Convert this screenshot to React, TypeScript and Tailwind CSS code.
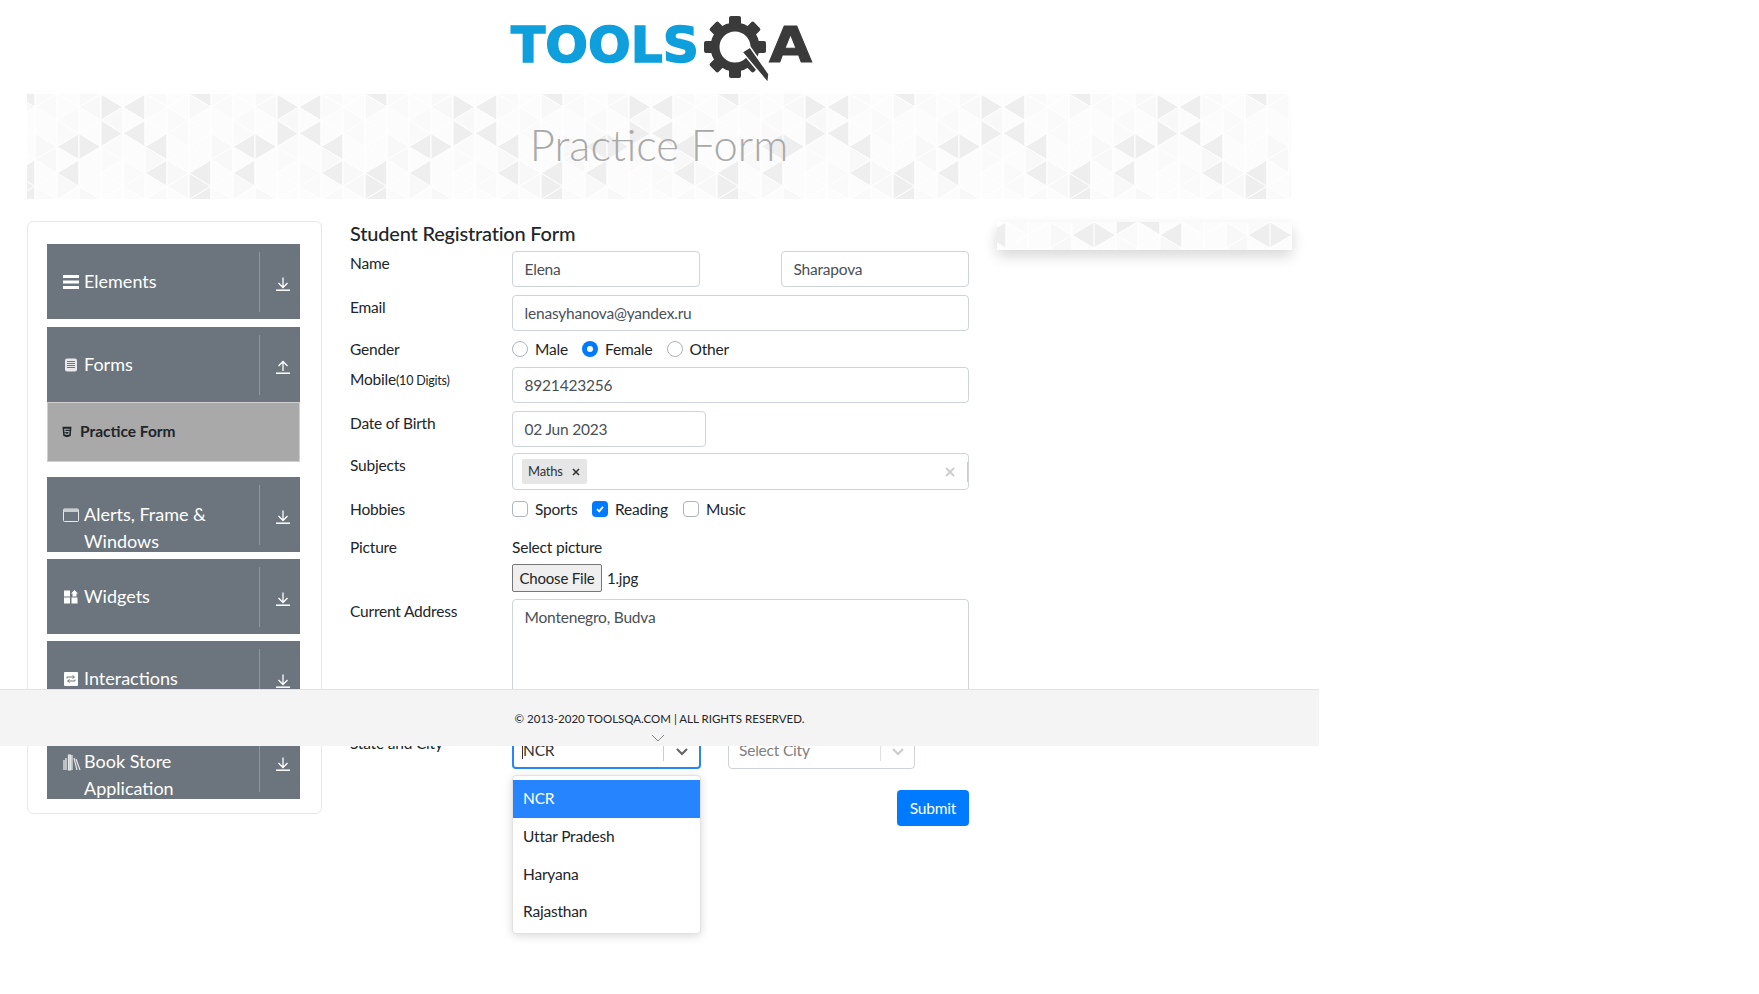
import type { ReactNode } from 'react'
import { FaHtml5 } from 'react-icons/fa'

const darkCells = new Set(['L2,0', 'R2,0', 'L6,0', 'R3,3', 'L5,3', 'L2,1', 'L6,1', 'L0,1', 'R7,1', 'R3,2', 'L5,2', 'L0,2'])

function Triangles({ x0, y0, width, height }: { x0: number; y0: number; width: number; height: number }) {
  const a = 26.4
  const polys: { points: string; fill: string; key: string }[] = []
  for (let k = -2; k * 22 + x0 < width + 22; k++) {
    const x = x0 + k * 22
    for (let n = -6; n < 8; n++) {
      const yc = y0 + a * n + (((k % 2) + 2) % 2 === 1 ? a / 2 : 0)
      if (yc < -a || yc > height + a) continue
      for (const dir of ['L', 'R']) {
        const kk = ((k % 8) + 8) % 8
        const nn = ((n % 4) + 4) % 4
        const h = (kk * 7 + nn * 13 + (dir === 'L' ? 3 : 0)) % 5
        const fill = darkCells.has(`${dir}${kk},${nn}`) ? '#eeeeee' : h === 0 ? '#f8f8f8' : h === 1 ? '#fafafa' : '#fcfcfc'
        const apex = dir === 'L' ? x - 22 : x + 22
        polys.push({
          key: `${dir}${k},${n}`,
          fill,
          points: `${x},${yc - a / 2} ${x},${yc + a / 2} ${apex},${yc}`,
        })
      }
    }
  }
  return (
    <svg className="absolute inset-0" width={width} height={height}>
      {polys.map((p) => (
        <polygon key={p.key} points={p.points} fill={p.fill} stroke="#ffffff" strokeWidth="1" />
      ))}
    </svg>
  )
}

function Logo() {
  const teeth = [0, 45, 90, 135, 180, 225, 270, 315]
  return (
    <svg width="320" height="94" viewBox="500 0 320 94">
      <text
        x="511"
        y="62"
        textLength="188"
        lengthAdjust="spacingAndGlyphs"
        fill="#0e9fdc"
        stroke="#0e9fdc"
        strokeWidth="1.5"
        fontFamily="DejaVu Sans"
        fontWeight="700"
        fontSize="50"
      >
        TOOLS
      </text>
      {teeth.map((t) => (
        <rect key={t} x="729" y="16" width="12" height="12" rx="2" fill="#3a3a3a" transform={`rotate(${t} 735 47)`} />
      ))}
      <circle cx="735" cy="47" r="20" fill="none" stroke="#3a3a3a" strokeWidth="9" />
      <path d="M742 52 L750 47 L769 74 L768 83 Z" fill="#3a3a3a" stroke="#ffffff" strokeWidth="1.5" />
      <text
        x="769"
        y="62"
        textLength="43"
        lengthAdjust="spacingAndGlyphs"
        fill="#3a3a3a"
        stroke="#3a3a3a"
        strokeWidth="1"
        fontFamily="DejaVu Sans"
        fontWeight="700"
        fontSize="50"
      >
        A
      </text>
    </svg>
  )
}

function Arrow({ up }: { up?: boolean }) {
  return (
    <svg width="14" height="14" viewBox="0 0 14 14" fill="none" stroke="#ffffff" strokeWidth="1.3">
      {up ? <path d="M7 11V1.5M2.5 6L7 1.5 11.5 6" /> : <path d="M7 0.5V10.5M2.5 6L7 10.5 11.5 6" />}
      <path d="M0 13.2H14" strokeWidth="1.5" />
    </svg>
  )
}

function BarsIcon() {
  return (
    <svg width="16" height="14" viewBox="0 0 16 14" fill="#ffffff">
      <rect y="0" width="16" height="3" />
      <rect y="5.5" width="16" height="3" />
      <rect y="11" width="16" height="3" />
    </svg>
  )
}

function FormIcon() {
  return (
    <svg width="16" height="14" viewBox="0 0 16 14">
      <rect x="2" y="0.5" width="12" height="13" rx="2" fill="#e8e9ea" />
      <path d="M4 3.5H12M4 5.5H12M4 7.5H12M4 9.5H12" stroke="#6c757d" strokeWidth="1" />
    </svg>
  )
}

function WindowIcon() {
  return (
    <svg width="16" height="14" viewBox="0 0 16 14" fill="none">
      <rect x="0.5" y="1" width="15" height="12.5" rx="1" stroke="#e8e9ea" />
      <rect x="0.5" y="1" width="15" height="3" fill="#c9cdd0" />
    </svg>
  )
}

function WidgetIcon() {
  return (
    <svg width="16" height="14" viewBox="0 0 16 14" fill="#ffffff">
      <rect x="1" y="0.5" width="6" height="6" />
      <rect x="1" y="7.5" width="6" height="6" />
      <rect x="8.5" y="7.5" width="6" height="6" />
      <path d="M11.5 0L15 3.5H13.5V6.5H9.5V3.5H8Z" />
    </svg>
  )
}

function InteractionIcon() {
  return (
    <svg width="16" height="14" viewBox="0 0 16 14">
      <rect x="1" y="0" width="14" height="14" rx="1" fill="#ffffff" />
      <path d="M4 6.5V5H11M9.5 3.5L11.5 5 9.5 6.5M12 7.5V9H5M6.5 7.5L4.5 9 6.5 10.5" fill="none" stroke="#6c757d" strokeWidth="1" />
    </svg>
  )
}

function BooksIcon() {
  return (
    <svg width="18" height="18" viewBox="0 0 18 18" fill="none" stroke="#e8e9ea">
      <path d="M1 7V17M3 5V17" strokeWidth="1.3" />
      <path d="M5.5 2H7.5V17H5.5ZM9 2V17" strokeWidth="1.2" fill="#c9cdd0" />
      <path d="M11 5L14 17M13 6L17 17" strokeWidth="1.2" />
    </svg>
  )
}

function MenuItem({ icon, label, up }: { icon: ReactNode; label: string; up?: boolean }) {
  return (
    <div className="flex h-[75px] overflow-hidden bg-[#6c757d] text-white">
      <div className="flex w-[212px] items-start pl-[16px] pt-[24px]">
        <span className="flex h-[27px] w-[21px] shrink-0 items-center">{icon}</span>
        <span className="text-[18px] leading-[27px]">{label}</span>
      </div>
      <div className="mt-[8px] h-[60px] w-px bg-[#8f969d]" />
      <div className="pl-[16px] pt-[33px]">
        <Arrow up={up} />
      </div>
    </div>
  )
}

function Sidebar() {
  return (
    <aside className="h-[593px] w-[295px] shrink-0 rounded-[6px] border border-[#e8e8e8] pl-[19px] pt-[22px]">
      <div className="w-[253px]">
        <MenuItem icon={<BarsIcon />} label="Elements" />
        <div className="mt-[8px]">
          <MenuItem icon={<FormIcon />} label="Forms" up />
        </div>
        <div className="flex h-[60px] items-center gap-[8px] border border-[#cfcfcf] bg-[#a9a9a9] pl-[14px] text-[15.5px] font-bold text-[#212529]">
          <FaHtml5 className="h-[12px] w-[10px]" />
          Practice Form
        </div>
        <div className="mt-[15px]">
          <MenuItem icon={<WindowIcon />} label="Alerts, Frame & Windows" />
        </div>
        <div className="mt-[7px]">
          <MenuItem icon={<WidgetIcon />} label="Widgets" />
        </div>
        <div className="mt-[7px]">
          <MenuItem icon={<InteractionIcon />} label="Interactions" />
        </div>
        <div className="mt-[8px]">
          <MenuItem icon={<BooksIcon />} label="Book Store Application" />
        </div>
      </div>
    </aside>
  )
}

function Field({ children, className }: { children: ReactNode; className: string }) {
  return (
    <div className={`flex items-center rounded-[4px] border border-[#ced4da] px-[11.5px] pt-[2px] text-[#495057] ${className}`}>{children}</div>
  )
}

function Row({ label, children, className }: { label: ReactNode; children: ReactNode; className: string }) {
  return (
    <div className={`flex ${className}`}>
      <div className="w-[162px] shrink-0 leading-[24px] text-[#212529]">{label}</div>
      <div className="flex-1">{children}</div>
    </div>
  )
}

function Radio({ checked, label, className }: { checked?: boolean; label: string; className: string }) {
  return (
    <div className={`flex items-center ${className}`}>
      {checked ? (
        <span className="flex size-[16px] items-center justify-center rounded-full bg-[#007bff]">
          <span className="size-[6px] rounded-full bg-white" />
        </span>
      ) : (
        <span className="size-[16px] rounded-full border border-[#adb5bd]" />
      )}
      <span className="ml-[7px] leading-[24px] text-[#212529]">{label}</span>
    </div>
  )
}

function Check({ checked, label, className }: { checked?: boolean; label: string; className: string }) {
  return (
    <div className={`flex items-center ${className}`}>
      {checked ? (
        <span className="flex size-[16px] items-center justify-center rounded-[4px] bg-[#007bff]">
          <svg width="10" height="10" viewBox="0 0 10 10" fill="none" stroke="#ffffff" strokeWidth="1.8">
            <path d="M2 5.2L4.2 7.4 8 2.8" />
          </svg>
        </span>
      ) : (
        <span className="size-[16px] rounded-[4px] border border-[#adb5bd]" />
      )}
      <span className="ml-[7px] leading-[24px] text-[#212529]">{label}</span>
    </div>
  )
}

function Chevron({ color, width }: { color: string; width: string }) {
  return (
    <svg width="20" height="20" viewBox="0 0 20 20" fill="none" stroke={color} strokeWidth={width}>
      <path d="M5 8L10 13 15 8" />
    </svg>
  )
}

function Form() {
  return (
    <section className="ml-[28px] w-[619px] shrink-0 text-[15.5px] tracking-[-0.2px]">
      <h5 className="h-[30px] text-[20px] font-medium leading-[24px] text-[#212529]">Student Registration Form</h5>
      <Row label="Name" className="h-[36px]">
        <div className="flex justify-between">
          <Field className="h-[36px] w-[188px]">Elena</Field>
          <Field className="h-[36px] w-[188px]">Sharapova</Field>
        </div>
      </Row>
      <Row label="Email" className="mt-[8px] h-[36px]">
        <Field className="h-[36px] w-full">lenasyhanova@yandex.ru</Field>
      </Row>
      <Row label="Gender" className="mt-[6px] h-[24px]">
        <div className="flex">
          <Radio label="Male" className="w-[70px]" />
          <Radio checked label="Female" className="w-[84.5px]" />
          <Radio label="Other" className="w-[70px]" />
        </div>
      </Row>
      <Row
        label={
          <>
            Mobile<span className="text-[12.5px]">(10 Digits)</span>
          </>
        }
        className="mt-[6px] h-[36px]"
      >
        <Field className="h-[36px] w-full">8921423256</Field>
      </Row>
      <Row label="Date of Birth" className="mt-[8px] h-[36px]">
        <Field className="h-[36px] w-[194px]">02 Jun 2023</Field>
      </Row>
      <Row label="Subjects" className="mt-[6px] h-[37px]">
        <div className="flex h-[37px] items-center rounded-[4px] border border-[#ced4da] pl-[9px]">
          <div className="flex h-[25px] w-[65px] items-center rounded-[2px] bg-[#e6e6e6] pl-[6px] text-[13px] text-[#333333]">
            Maths
            <svg className="ml-[9px]" width="8" height="8" viewBox="0 0 8 8" stroke="#333333" strokeWidth="1.6">
              <path d="M1 1L7 7M7 1L1 7" />
            </svg>
          </div>
          <svg className="ml-[358px]" width="10" height="10" viewBox="0 0 10 10" stroke="#cccccc" strokeWidth="1.8">
            <path d="M1 1L9 9M9 1L1 9" />
          </svg>
          <div className="ml-[12px] h-[20px] w-px bg-[#cccccc]" />
        </div>
      </Row>
      <Row label="Hobbies" className="mt-[7px] h-[24px]">
        <div className="flex">
          <Check label="Sports" className="w-[80px]" />
          <Check checked label="Reading" className="w-[91px]" />
          <Check label="Music" className="w-[80px]" />
        </div>
      </Row>
      <Row label="Picture" className="mt-[14px] h-[64px]">
        <div className="leading-[24px] text-[#212529]">Select picture</div>
        <div className="mt-[5px] flex items-center text-[#212529]">
          <div className="flex h-[28px] w-[90px] items-center justify-center rounded-[2px] border border-[#767676] bg-[#efefef] text-[15px]">
            Choose File
          </div>
          <span className="ml-[5px] text-[15px]">1.jpg</span>
        </div>
      </Row>
      <Row label="Current Address" className="mt-[0px] h-[122px]">
        <div className="h-[122px] rounded-[4px] border border-[#ced4da] px-[11.5px] py-[6px] text-[#495057]">Montenegro, Budva</div>
      </Row>
      <Row label="State and City" className="mt-[10px] h-[38px]">
        <div className="flex gap-[27px]">
          <div className="relative h-[38px] w-[189px]">
            <div className="flex h-[38px] items-center rounded-[4px] border-2 border-[#2684ff] pl-[8px] pr-[7px] pt-px text-[#333333]">
              <span className="h-[16px] w-px bg-[#333333]" />
              <span className="flex-1">NCR</span>
              <span className="mr-[8px] h-[20px] w-px bg-[#cccccc]" />
              <Chevron color="#666666" width="2.2" />
            </div>
            <div className="absolute left-0 top-[44px] h-[159px] w-[189px] rounded-[4px] border border-[#e2e2e2] bg-white py-[4px] text-[#212529] shadow-[0_2px_10px_rgba(0,0,0,0.15)]">
              <div className="flex h-[38px] items-center bg-[#2684ff] px-[10px] text-white">NCR</div>
              <div className="flex h-[38px] items-center px-[10px]">Uttar Pradesh</div>
              <div className="flex h-[37px] items-center px-[10px]">Haryana</div>
              <div className="flex h-[38px] items-center px-[10px]">Rajasthan</div>
            </div>
          </div>
          <div className="flex h-[38px] w-[187px] items-center rounded-[4px] border border-[#ced4da] pl-[10px] pr-[6px] pt-px text-[#808080]">
            <span className="flex-1">Select City</span>
            <span className="mr-[7px] h-[20px] w-px bg-[#e0e0e0]" />
            <Chevron color="#cccccc" width="2.2" />
          </div>
        </div>
      </Row>
      <div className="mt-[21px] flex justify-end">
        <div className="flex h-[36px] w-[72px] items-center justify-center rounded-[4px] bg-[#007bff] pt-[2px] text-white">Submit</div>
      </div>
    </section>
  )
}

export default function App() {
  return (
    <div className="relative h-screen overflow-hidden bg-white font-['Lato',sans-serif]">
      <header className="flex h-[94px] w-[1319px] justify-center">
        <Logo />
      </header>
      <div className="relative ml-[27px] flex h-[105px] w-[1264px] items-center justify-center overflow-hidden pb-[3px]">
        <Triangles x0={8} y0={52.7} width={1264} height={105} />
        <h1 className="relative text-[43.5px] font-light leading-none text-[#a9a9a9]">Practice Form</h1>
      </div>
      <main className="ml-[27px] mt-[22px] flex items-start">
        <Sidebar />
        <Form />
        <div className="relative ml-[28px] mt-px h-[28px] w-[295px] overflow-hidden shadow-[0_6px_14px_rgba(0,0,0,0.16)]">
          <Triangles x0={53} y0={13} width={295} height={28} />
        </div>
      </main>
      <footer className="absolute left-0 top-[689px] flex h-[57px] w-[1319px] items-center justify-center border-t border-[#e3e3e3] bg-[#f4f4f4] pt-[2px] text-[11.5px] text-[#212529]">
        © 2013-2020 TOOLSQA.COM | ALL RIGHTS RESERVED.
        <svg className="absolute left-[651px] top-[44px]" width="14" height="8" viewBox="0 0 14 8" fill="none" stroke="#8a8a8a">
          <path d="M1 1L7 7 13 1" />
        </svg>
      </footer>
    </div>
  )
}
